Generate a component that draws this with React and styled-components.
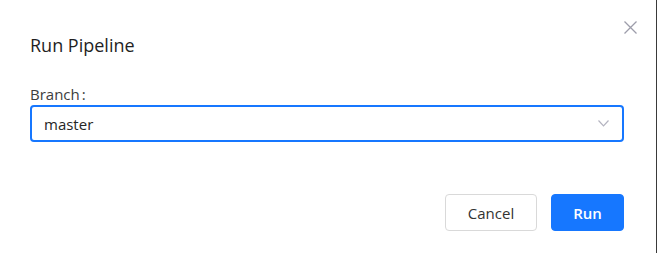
import React from "react";
import styled, { createGlobalStyle } from "styled-components";

const GlobalStyle = createGlobalStyle`
  html, body {
    margin: 0;
    padding: 0;
    background: #ffffff;
    font-family: "Open Sans", "Noto Sans", "Liberation Sans", sans-serif;
  }
  * { box-sizing: border-box; }
`;

const Dialog = styled.div`
  width: 657px;
  height: 253px;
  background: #ffffff;
  border-right: 1px solid #3a3a3a;
  padding: 0 32px 0 30px;
  display: flex;
  flex-direction: column;
`;

const Header = styled.div`
  display: flex;
  align-items: flex-start;
  justify-content: space-between;
  padding-top: 21px;
`;

const Title = styled.h2`
  margin: 11px 0 0 0;
  font-size: 18px;
  line-height: 26px;
  font-weight: 400;
  color: #1f1f1f;
`;

const CloseButton = styled.button`
  width: 13px;
  height: 13px;
  padding: 0;
  margin-right: -13px;
  border: none;
  background: transparent;
  display: flex;
  cursor: pointer;
`;

const Field = styled.div`
  margin-top: 25px;
  display: flex;
  flex-direction: column;
`;

const Label = styled.label`
  font-size: 15px;
  line-height: 22px;
  color: #3d3d3d;
`;

const Colon = styled.span`
  margin-left: 2px;
`;

const Select = styled.div`
  height: 37px;
  border: 2px solid #1677ff;
  border-radius: 4px;
  display: flex;
  align-items: center;
  justify-content: space-between;
  padding: 0 13px 0 12px;
  font-size: 15px;
  color: #262626;
`;

const Footer = styled.div`
  margin-top: 52px;
  display: flex;
  justify-content: flex-end;
  gap: 14px;
`;

const Button = styled.button`
  height: 37px;
  width: ${(p) => p.$w}px;
  border-radius: 4px;
  font-family: inherit;
  font-size: 15px;
  cursor: pointer;
  border: 1px solid ${(p) => (p.$primary ? "#1677ff" : "#d9d9d9")};
  background: ${(p) => (p.$primary ? "#1677ff" : "#ffffff")};
  color: ${(p) => (p.$primary ? "#ffffff" : "#333333")};
  font-weight: ${(p) => (p.$primary ? 600 : 400)};
`;

export default function App() {
  return (
    <>
      <GlobalStyle />
      <Dialog>
        <Header>
          <Title>Run Pipeline</Title>
          <CloseButton aria-label="Close">
            <svg width="13" height="13" viewBox="0 0 13 13">
              <path d="M0.5 0.5 L12.5 12.5 M12.5 0.5 L0.5 12.5" stroke="#9d9daa" strokeWidth="1.3" fill="none" />
            </svg>
          </CloseButton>
        </Header>
        <Field>
          <Label>
            Branch<Colon>:</Colon>
          </Label>
          <Select>
            <span>master</span>
            <svg width="11" height="7" viewBox="0 0 11 7">
              <path d="M0.5 0.5 L5.5 5.8 L10.5 0.5" stroke="#b4b4c0" strokeWidth="1.2" fill="none" />
            </svg>
          </Select>
        </Field>
        <Footer>
          <Button $w={92}>Cancel</Button>
          <Button $w={73} $primary>Run</Button>
        </Footer>
      </Dialog>
    </>
  );
}
